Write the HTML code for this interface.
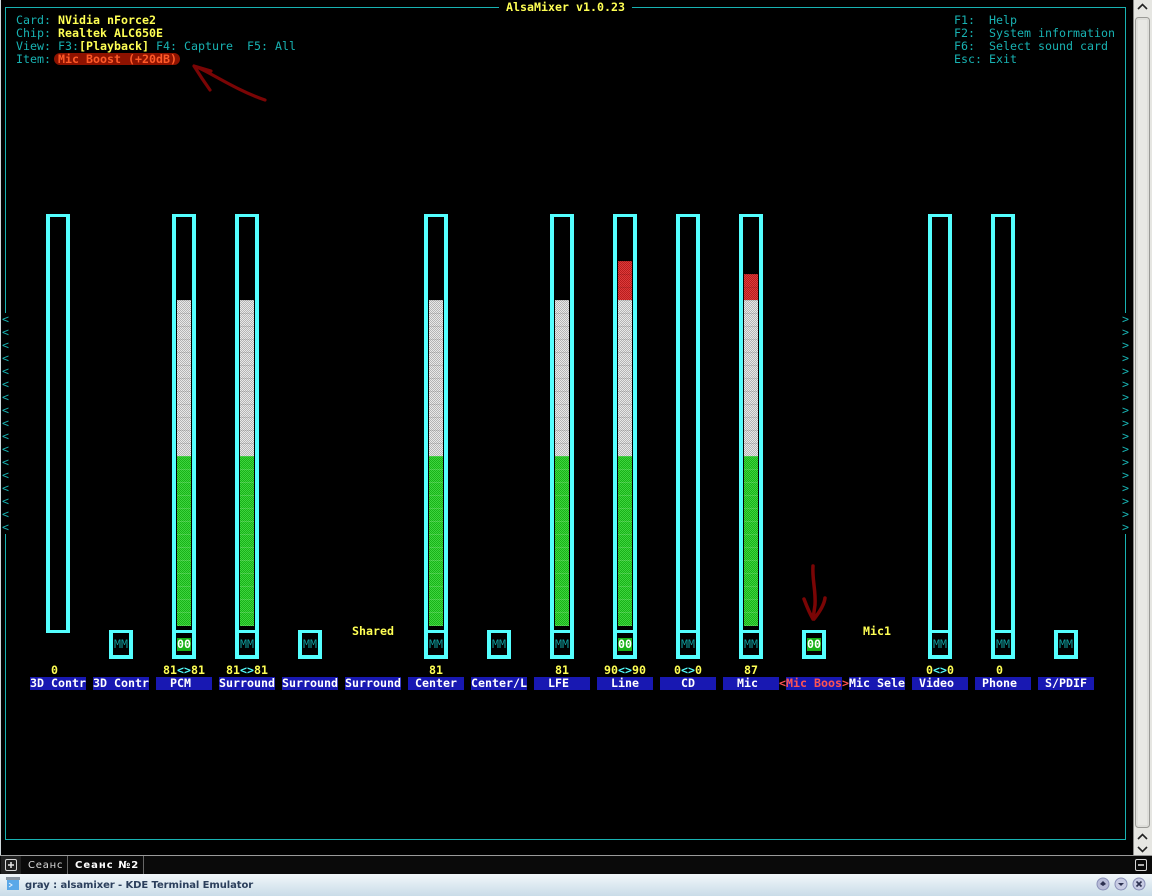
<!DOCTYPE html>
<html><head><meta charset="utf-8"><style>
html,body{margin:0;padding:0;background:#000}
#r{position:relative;width:1152px;height:896px;overflow:hidden;background:#000;font:11.63px/13px "DejaVu Sans Mono","Liberation Mono",monospace;color:#18b2b2}
#r div,#r span.a{position:absolute}
.t{position:absolute;white-space:pre;height:13px}
.y{color:#ffff54;font-weight:bold}
.c{color:#54ffff;font-weight:bold}
.w{color:#fff;font-weight:bold}
.l{position:absolute;top:677px;width:56px;height:13px;background:#1818b2;color:#fff;font-weight:bold;white-space:pre}
.bar{position:absolute;top:214px;width:16px;height:413px;border:solid #54ffff;border-width:3px 4px}
.box{position:absolute;top:630px;width:16px;height:22px;border:solid #54ffff;border-width:3px 4px 4px;background:#000}
.mm{position:absolute;top:638px;width:14px;height:13px;white-space:pre;color:#0f9a9a}
.oo{position:absolute;top:638px;width:14px;height:13px;background:#18b218;color:#fff;font-weight:bold;white-space:pre}
.g,.s,.d{position:absolute;width:14px}
.g{top:456px;height:170px;background:repeating-linear-gradient(rgba(255,255,255,.14) 0 1px,transparent 1px 13px),repeating-conic-gradient(#18b218 0 25%,#3ed43e 0 50%) 0 0/2px 2px}
.s{top:300px;height:156px;background:repeating-linear-gradient(rgba(0,0,0,.1) 0 1px,transparent 1px 13px),repeating-conic-gradient(#b4b4b4 0 25%,#e8e8e8 0 50%) 0 0/2px 2px}
.d{height:39px;background:repeating-linear-gradient(rgba(0,0,0,.1) 0 1px,transparent 1px 13px),repeating-conic-gradient(#b81c1c 0 25%,#dc3c3c 0 50%) 0 0/2px 2px}
</style></head><body><div id="r">
<div style="left:5px;top:7px;width:1119px;height:831px;border:1px solid #18b2b2"></div>
<div style="left:499px;top:1px;width:133px;height:13px;background:#000"></div>
<div style="left:0;top:313px;width:12px;height:221px;background:#000"></div>
<div style="left:1118px;top:313px;width:15px;height:221px;background:#000"></div>
<span class="t y" style="left:506px;top:1px">AlsaMixer v1.0.23</span>

<span class="t" style="left:16px;top:14px">Card:</span><span class="t y" style="left:58px;top:14px">NVidia nForce2</span>
<span class="t" style="left:16px;top:27px">Chip:</span><span class="t y" style="left:58px;top:27px">Realtek ALC650E</span>
<span class="t" style="left:16px;top:40px">View: F3:</span><span class="t y" style="left:79px;top:40px">[Playback]</span><span class="t" style="left:156px;top:40px">F4: Capture  F5: All</span>
<span class="t" style="left:16px;top:53px">Item:</span>
<svg style="position:absolute;left:0;top:0" width="1152" height="896">
<rect x="54" y="53" width="126" height="12" rx="6" fill="#8e1200"/>
<path d="M194 66 C205 69 235 90 265 100 M194 66 L211 71 M194 66 C199 74 205 83 210 90" fill="none" stroke="#7a0505" stroke-width="3.200" stroke-linecap="round"/>
<path d="M813 566 C812 580 816 590 815 605 L813 619 M804 599 C807 607 810 614 813 619 M825 598 C824 606 818 614 814 619" fill="none" stroke="#7a0505" stroke-width="3.500" stroke-linecap="round"/>
</svg>
<span class="t" style="left:58px;top:53px;color:#ff5a28;font-weight:bold">Mic Boost (+20dB)</span>

<span class="t" style="left:954px;top:14px">F1:  Help</span>
<span class="t" style="left:954px;top:27px">F2:  System information</span>
<span class="t" style="left:954px;top:40px">F6:  Select sound card</span>
<span class="t" style="left:954px;top:53px">Esc: Exit</span>

<span class="t" style="left:2px;top:313px">&lt;
&lt;
&lt;
&lt;
&lt;
&lt;
&lt;
&lt;
&lt;
&lt;
&lt;
&lt;
&lt;
&lt;
&lt;
&lt;
&lt;</span>
<span class="t" style="left:1122px;top:313px">&gt;
&gt;
&gt;
&gt;
&gt;
&gt;
&gt;
&gt;
&gt;
&gt;
&gt;
&gt;
&gt;
&gt;
&gt;
&gt;
&gt;</span>

<div class="bar" style="left:46px"></div>
<div class="bar" style="left:172px"></div><div class="s" style="left:177px"></div><div class="g" style="left:177px"></div>
<div class="bar" style="left:235px"></div><div class="s" style="left:240px"></div><div class="g" style="left:240px"></div>
<div class="bar" style="left:424px"></div><div class="s" style="left:429px"></div><div class="g" style="left:429px"></div>
<div class="bar" style="left:550px"></div><div class="s" style="left:555px"></div><div class="g" style="left:555px"></div>
<div class="bar" style="left:613px"></div><div class="d" style="left:618px;top:261px"></div><div class="s" style="left:618px"></div><div class="g" style="left:618px"></div>
<div class="bar" style="left:676px"></div>
<div class="bar" style="left:739px"></div><div class="d" style="left:744px;top:274px;height:26px"></div><div class="s" style="left:744px"></div><div class="g" style="left:744px"></div>
<div class="bar" style="left:928px"></div>
<div class="bar" style="left:991px"></div>

<div class="box" style="left:109px"></div><span class="mm" style="left:114px">MM</span>
<div class="box" style="left:172px"></div><span class="oo" style="left:177px">00</span>
<div class="box" style="left:235px"></div><span class="mm" style="left:240px">MM</span>
<div class="box" style="left:298px"></div><span class="mm" style="left:303px">MM</span>
<div class="box" style="left:424px"></div><span class="mm" style="left:429px">MM</span>
<div class="box" style="left:487px"></div><span class="mm" style="left:492px">MM</span>
<div class="box" style="left:550px"></div><span class="mm" style="left:555px">MM</span>
<div class="box" style="left:613px"></div><span class="oo" style="left:618px">00</span>
<div class="box" style="left:676px"></div><span class="mm" style="left:681px">MM</span>
<div class="box" style="left:739px"></div><span class="mm" style="left:744px">MM</span>
<div class="box" style="left:802px"></div><span class="oo" style="left:807px">00</span>
<div class="box" style="left:928px"></div><span class="mm" style="left:933px">MM</span>
<div class="box" style="left:991px"></div><span class="mm" style="left:996px">MM</span>
<div class="box" style="left:1054px"></div><span class="mm" style="left:1059px">MM</span>

<span class="t y" style="left:352px;top:625px">Shared</span>
<span class="t y" style="left:863px;top:625px">Mic1</span>

<span class="t y" style="left:51px;top:664px">0</span>
<span class="t y" style="left:163px;top:664px">81<span class="c">&lt;&gt;</span>81</span>
<span class="t y" style="left:226px;top:664px">81<span class="c">&lt;&gt;</span>81</span>
<span class="t y" style="left:429px;top:664px">81</span>
<span class="t y" style="left:555px;top:664px">81</span>
<span class="t y" style="left:604px;top:664px">90<span class="c">&lt;&gt;</span>90</span>
<span class="t y" style="left:674px;top:664px">0<span class="c">&lt;&gt;</span>0</span>
<span class="t y" style="left:744px;top:664px">87</span>
<span class="t y" style="left:926px;top:664px">0<span class="c">&lt;&gt;</span>0</span>
<span class="t y" style="left:996px;top:664px">0</span>

<span class="l" style="left:30px">3D Contr</span>
<span class="l" style="left:93px">3D Contr</span>
<span class="l" style="left:156px">  PCM   </span>
<span class="l" style="left:219px">Surround</span>
<span class="l" style="left:282px">Surround</span>
<span class="l" style="left:345px">Surround</span>
<span class="l" style="left:408px"> Center </span>
<span class="l" style="left:471px">Center/L</span>
<span class="l" style="left:534px">  LFE   </span>
<span class="l" style="left:597px">  Line  </span>
<span class="l" style="left:660px">   CD   </span>
<span class="l" style="left:723px">  Mic   </span>
<span class="t" style="left:779px;top:677px;color:#ff5454;font-weight:bold">&lt;</span>
<span class="l" style="left:786px;color:#ff5454">Mic Boos</span>
<span class="t" style="left:842px;top:677px;color:#ff5454;font-weight:bold">&gt;</span>
<span class="l" style="left:849px">Mic Sele</span>
<span class="l" style="left:912px"> Video  </span>
<span class="l" style="left:975px"> Phone  </span>
<span class="l" style="left:1038px"> S/PDIF </span>

<div style="left:0;top:0;width:1px;height:880px;background:#cfd8dc"></div>

<div style="left:1133px;top:0;width:19px;height:855px;background:#e6e6e2"></div>
<div style="left:1133px;top:0;width:1px;height:855px;background:#8a8a88"></div>
<svg style="position:absolute;left:1133px;top:0" width="19" height="855">
<path d="M5 9 L9.500 4.500 L14 9" fill="none" stroke="#222" stroke-width="1.600"/>
<rect x="2.500" y="17.500" width="14" height="810" rx="3" fill="#dededa" stroke="#9a9a96"/>
<rect x="5" y="20" width="9" height="805" fill="#e8e8e4"/>
<path d="M5 839 L9.500 834.500 L14 839 M5 847 L9.500 851.500 L14 847" fill="none" stroke="#222" stroke-width="1.600"/>
</svg>

<div style="left:0;top:855px;width:1152px;height:1px;background:#9a9a9a"></div>
<div style="left:0;top:856px;width:1152px;height:18px;background:#0a0a0a"></div>
<div style="left:1px;top:856px;width:20px;height:18px;background:#202020"></div>
<svg style="position:absolute;left:0;top:856px" width="1152" height="18">
<rect x="5.500" y="3.500" width="11" height="11" rx="1.500" fill="none" stroke="#d8d8d8"/>
<path d="M11 6 V12 M8 9 H14" stroke="#e8e8e8" stroke-width="1.500"/>
<path d="M67.500 0 V18 M143.500 0 V18" stroke="#666"/>
<rect x="1135.500" y="3.500" width="11" height="11" rx="1.500" fill="none" stroke="#d8d8d8"/>
<path d="M1138 9 H1144" stroke="#e8e8e8" stroke-width="1.500"/>
</svg>
<span class="t" style="left:28px;top:859px;font:10px/14px 'DejaVu Sans',sans-serif;color:#ddd;letter-spacing:.8px">Сеанс</span>
<span class="t" style="left:75px;top:859px;font:bold 10px/14px 'DejaVu Sans',sans-serif;color:#fff;letter-spacing:1px">Сеанс №2</span>

<div style="left:0;top:874px;width:1152px;height:22px;background:linear-gradient(#f2f7fa,#c9dce8)"></div>
<svg style="position:absolute;left:0;top:874px" width="1152" height="22">
<rect x="6" y="3" width="14" height="3" fill="#8a96a2"/>
<rect x="7" y="6" width="12" height="10" fill="#5aa8e8"/>
<path d="M9 9 L12 11 L9 13" fill="none" stroke="#e8f4ff"/>
<g stroke="#8a90b8"><circle cx="1103" cy="10" r="6" fill="#b8bcd8"/><circle cx="1121" cy="10" r="6" fill="#c8cce4"/><circle cx="1139" cy="10" r="6" fill="#c8cce4"/></g>
<path d="M1100 10 L1103 7 L1106 10 L1103 12 Z" fill="#2c3050"/>
<path d="M1118 9 H1124 L1121 12 Z" fill="#2c3050"/>
<path d="M1136.500 7.500 L1141.500 12.500 M1141.500 7.500 L1136.500 12.500" stroke="#2c3050" stroke-width="1.600"/>
</svg>
<span class="t" style="left:25px;top:879px;font:bold 10px/14px 'DejaVu Sans',sans-serif;color:#2b3f5c;letter-spacing:-.08px">gray : alsamixer - KDE Terminal Emulator</span>
</div></body></html>
